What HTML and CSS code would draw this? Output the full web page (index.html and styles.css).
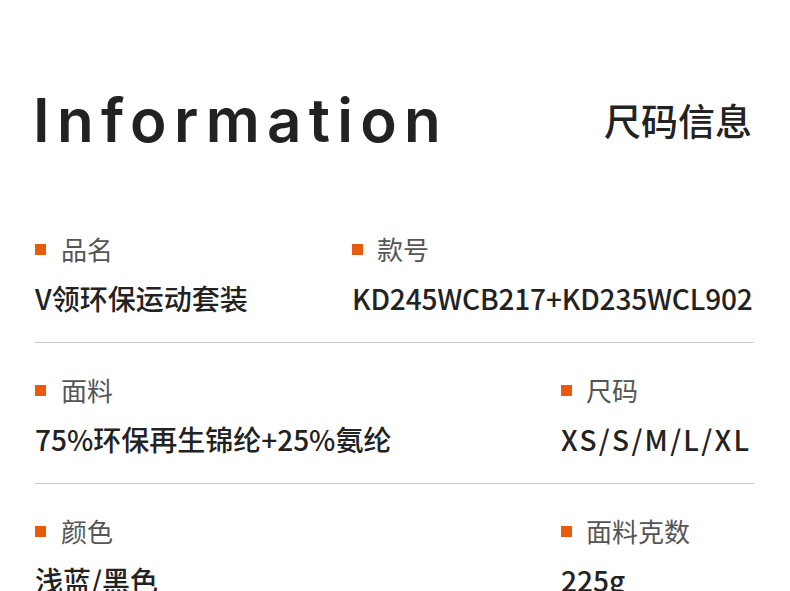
FILE: index.html
```html
<!DOCTYPE html>
<html lang="zh-CN">
<head>
    <meta charset="UTF-8">
    <meta name="viewport" content="width=device-width, initial-scale=1.0">
    <title>尺码信息</title>
    <link rel="stylesheet" href="styles.css">
</head>
<body>
    <!-- Header -->
    <div class="header">
        <h1 class="title-en">Information</h1>
        <h2 class="title-cn">尺码信息</h2>
    </div>

    <!-- Spec list -->
    <div class="specs">
        <div class="spec-row first">
            <div class="spec">
                <div class="label"><span class="dot"></span>品名</div>
                <div class="value">V领环保运动套装</div>
            </div>
            <div class="spec">
                <div class="label"><span class="dot"></span>款号</div>
                <div class="value code">KD245WCB217+KD235WCL902</div>
            </div>
        </div>

        <div class="spec-row">
            <div class="spec">
                <div class="label"><span class="dot"></span>面料</div>
                <div class="value">75%环保再生锦纶+25%氨纶</div>
            </div>
            <div class="spec">
                <div class="label"><span class="dot"></span>尺码</div>
                <div class="value sizes">XS/S/M/L/XL</div>
            </div>
        </div>

        <div class="spec-row last">
            <div class="spec">
                <div class="label"><span class="dot"></span>颜色</div>
                <div class="value">浅蓝/黑色</div>
            </div>
            <div class="spec">
                <div class="label"><span class="dot"></span>面料克数</div>
                <div class="value">225g</div>
            </div>
        </div>
    </div>
</body>
</html>
```

FILE: styles.css
```css
body {
    margin: 0;
    padding: 0;
    background-color: #ffffff;
    color: #222222;
    font-family: "Noto Sans CJK SC", "Noto Sans", sans-serif;
}

/* Header */
.header {
    display: flex;
    justify-content: space-between;
    align-items: center;
    padding: 90px 38px 0 33px;
}

.title-en {
    margin: 0;
    font-family: Inter, "Noto Sans", sans-serif;
    font-size: 60px;
    font-weight: 600;
    line-height: 60px;
    letter-spacing: 7.3px;
    color: #222222;
}

.title-cn {
    margin: 0;
    font-size: 37px;
    font-weight: 500;
    line-height: 60px;
    color: #222222;
}

/* Spec rows */
.specs {
    margin-top: 84px;
    padding: 0 36px 0 35px;
}

.spec-row {
    display: grid;
    grid-template-columns: 526px 1fr;
    padding: 32px 0 29px;
    border-bottom: 1px solid #c9c9c9;
}

.spec-row.first {
    grid-template-columns: 317px 1fr;
    padding-top: 0;
}

.spec-row.last {
    border-bottom: none;
}

.label {
    display: flex;
    align-items: center;
    gap: 14px;
    font-size: 26px;
    line-height: 30px;
    color: #555555;
}

.spec-row .spec:first-child .label {
    gap: 15px;
}

.dot {
    width: 11px;
    height: 11px;
    background-color: #e85a0c;
}

.value {
    margin-top: 19px;
    font-size: 28px;
    font-weight: 500;
    line-height: 30px;
    color: #222222;
}

.value.code {
    letter-spacing: -0.15px;
}

.value.sizes {
    letter-spacing: 2.3px;
}
```
